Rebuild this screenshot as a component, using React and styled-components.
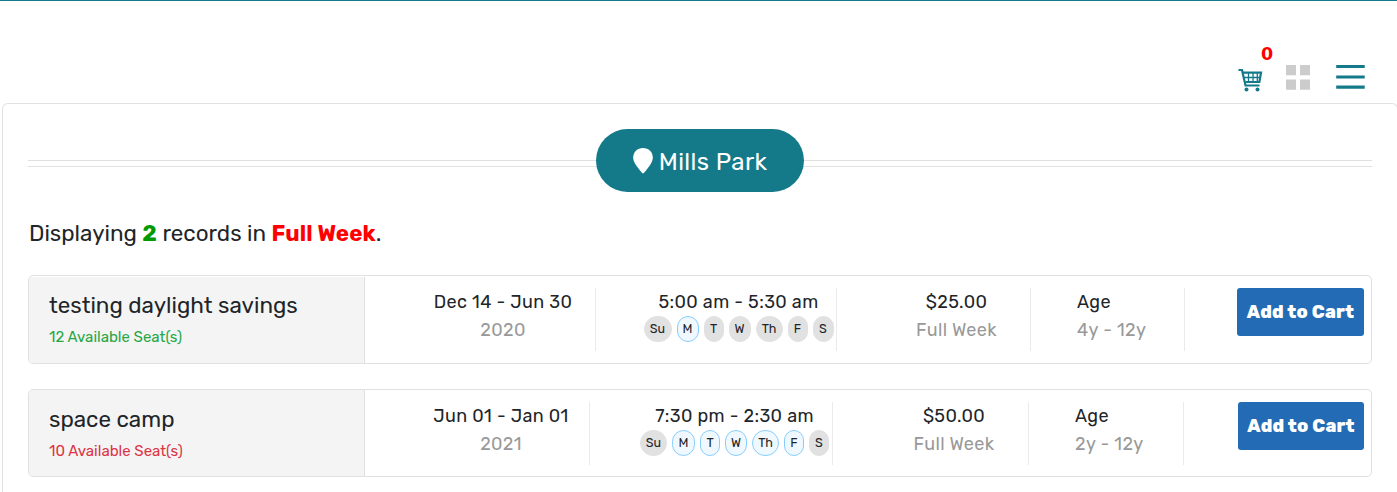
import React from "react";
import styled, { createGlobalStyle } from "styled-components";

const teal = "#147a8a";

const GlobalStyle = createGlobalStyle`
  * { box-sizing: border-box; }
  body {
    margin: 0;
    overflow: hidden;
    background: #fff;
    color: #212529;
    font-family: Rubik, Roboto, "Liberation Sans", sans-serif;
    font-size: 18px;
    font-weight: 400;
  }
`;

const Page = styled.div`
  height: 492px;
  overflow: hidden;
`;

const Header = styled.header`
  display: flex;
  justify-content: flex-end;
  align-items: flex-start;
  height: 103px;
  padding: 64px 32px 0 0;
  border-top: 1px solid ${teal};
`;

const HeaderIcon = styled.a`
  position: relative;
  display: block;
  height: 28px;
  margin-left: ${(p) => p.$gap || 0}px;
  svg { display: block; }
`;

const CartCount = styled.span`
  position: absolute;
  top: -21px;
  left: 23px;
  color: #f00;
  font: bold 17.5px/20px "DejaVu Sans", sans-serif;
`;

const Panel = styled.main`
  width: 1396px;
  height: 389px;
  margin-left: 2px;
  padding: 25px 25px 0;
  border: 1px solid #e1e1e1;
  border-bottom: 0;
  border-radius: 6px 6px 0 0;
`;

const Divider = styled.div`
  display: flex;
  align-items: center;
  height: 63px;
  &::before,
  &::after {
    content: "";
    flex: 1;
    height: 5px;
    margin-top: 6px;
    border: solid #e1e1e1;
    border-width: 1px 0;
  }
`;

const Location = styled.h2`
  display: flex;
  align-items: center;
  justify-content: center;
  gap: 6px;
  width: 208px;
  height: 63px;
  margin: 0;
  border-radius: 32px;
  background: ${teal};
  color: #fff;
  font-size: 24px;
  font-weight: 400;
  letter-spacing: 0.4px;
  line-height: 30px;
  padding-top: 3px;
  svg { margin-bottom: 2px; }
`;

const Summary = styled.p`
  margin: 27px 0 27px 1px;
  font-size: 22.4px;
  line-height: 29px;
  white-space: pre;
`;

const Strong = styled.strong`
  color: ${(p) => p.$color};
  font-weight: 700;
  letter-spacing: 0.1px;
`;

const Card = styled.article`
  display: grid;
  grid-template-columns: ${(p) => p.$columns};
  height: ${(p) => p.$height}px;
  width: 1344px;
  margin-bottom: 25px;
  border: 1px solid #e1e1e1;
  border-radius: 5px;
  overflow: hidden;
`;

const Title = styled.div`
  margin-top: ${(p) => p.$inset}px;
  padding: ${(p) => 14 - p.$inset}px 0 0 20px;
  border-right: 1px solid #e1e1e1;
  background: #f4f4f4;
`;

const Name = styled.h3`
  margin: 0;
  padding-top: 1px;
  font-size: 22.4px;
  font-weight: 400;
  line-height: 29px;
`;

const Seats = styled.div`
  margin-top: 7px;
  color: ${(p) => (p.$low ? "#dc3545" : "#28a745")};
  font-size: 15px;
  line-height: 20px;
`;

const Cell = styled.div`
  height: 63px;
  margin-top: 12px;
  padding: 0 ${(p) => p.$right || 0}px 0 ${(p) => p.$left}px;
  border-right: 1px solid #eaeaea;
  text-align: ${(p) => p.$align || "center"};
  white-space: nowrap;
`;

const Value = styled.div`
  line-height: 28px;
  letter-spacing: 0.36px;
`;

const Muted = styled(Value)`
  color: #999;
`;

const Days = styled.div`
  display: flex;
  justify-content: center;
  gap: 5px;
`;

const Day = styled.span`
  width: ${(p) => p.$width}px;
  height: 26px;
  border: 1px solid ${(p) => (p.$on ? "#87cefa" : "#e1e1e1")};
  border-radius: 13px;
  background: ${(p) => (p.$on ? "#f0f8ff" : "#e1e1e1")};
  font-size: 12.5px;
  line-height: 24px;
  text-align: center;
`;

const Action = styled.div`
  display: flex;
  justify-content: flex-end;
  padding: 12px 7px 0 0;
`;

const CartButton = styled.button`
  width: ${(p) => p.$width}px;
  height: 48px;
  padding: 0;
  border: 0;
  border-radius: 3px;
  background: #236cb5;
  color: #fff;
  font: 800 18px/48px Rubik, Roboto, sans-serif;
  letter-spacing: 0.2px;
  white-space: nowrap;
`;

const CartIcon = () => (
  <svg width="25" height="28" viewBox="0 0 25 28" fill="none" stroke={teal}>
    <path d="M0.5 5H4L7.5 20.5H21.5" strokeWidth="2.2" />
    <path d="M5 7.7H23L21.4 17H7.5" strokeWidth="2.2" />
    <path d="M6 12.5H22M10.5 7V17M15 7V17M19.3 7V17" strokeWidth="1.3" />
    <circle cx="8.5" cy="24.6" r="2" fill={teal} stroke="none" />
    <circle cx="19.5" cy="24.6" r="2" fill={teal} stroke="none" />
  </svg>
);

const GridIcon = () => (
  <svg width="24" height="25" fill="#ccc">
    <path d="M0 0h10v10.3H0zM14 0h10v10.3H14zM0 14.4h10v10.3H0zM14 14.4h10v10.3H14z" />
  </svg>
);

const MenuIcon = () => (
  <svg width="29" height="25" fill={teal}>
    <path d="M0.2 0h28.5v3H0.2zM0.2 10.4h28.5v3.2H0.2zM0.2 20.4h28.5v3.3H0.2z" />
  </svg>
);

const PinIcon = () => (
  <svg width="20" height="26" viewBox="0 0 20 26" fill="#fff">
    <path d="M10 0C4.3 0 .2 4.1.2 9.4c0 4.4 2.7 7.8 9 15.7q.8.9 1.6 0c6.3-7.9 9-11.3 9-15.7C19.8 4.1 15.7 0 10 0Z" />
  </svg>
);

const DAY_NAMES = ["Su", "M", "T", "W", "Th", "F", "S"];

const PROGRAMS = [
  {
    name: "testing daylight savings", seats: 12, low: false,
    dates: "Dec 14 - Jun 30", year: "2020", time: "5:00 am - 5:30 am",
    days: ["M"], dayWidths: [28, 22, 20, 22, 27, 20, 21],
    price: "$25.00", ages: "4y - 12y",
    height: 89, inset: 1, columns: "336px 231px 241px 194px 154px 1fr",
    pads: [[48, 2], [47, 2], [48, 2]], buttonWidth: 127,
  },
  {
    name: "space camp", seats: 10, low: true,
    dates: "Jun 01 - Jan 01", year: "2021", time: "7:30 pm - 2:30 am",
    days: ["M", "T", "W", "Th", "F"], dayWidths: [27, 23, 20, 22, 27, 20, 20],
    price: "$50.00", ages: "2y - 12y",
    height: 88, inset: 0, columns: "336px 225px 243px 196px 155px 1fr",
    pads: [[48, 0], [50, 3], [48, 1]], buttonWidth: 126,
  },
];

const ProgramCard = ({ program: p }) => (
  <Card $columns={p.columns} $height={p.height}>
    <Title $inset={p.inset}>
      <Name>{p.name}</Name>
      <Seats $low={p.low}>{p.seats} Available Seat(s)</Seats>
    </Title>
    <Cell $left={p.pads[0][0]} $right={p.pads[0][1]}>
      <Value>{p.dates}</Value>
      <Muted>{p.year}</Muted>
    </Cell>
    <Cell $left={p.pads[1][0]} $right={p.pads[1][1]}>
      <Value>{p.time}</Value>
      <Days>
        {DAY_NAMES.map((d, i) => (
          <Day key={d} $on={p.days.includes(d)} $width={p.dayWidths[i]}>{d}</Day>
        ))}
      </Days>
    </Cell>
    <Cell $left={p.pads[2][0]} $right={p.pads[2][1]}>
      <Value>{p.price}</Value>
      <Muted>Full Week</Muted>
    </Cell>
    <Cell $left={46} $align="left">
      <Value>Age</Value>
      <Muted>{p.ages}</Muted>
    </Cell>
    <Action>
      <CartButton $width={p.buttonWidth}>Add to Cart</CartButton>
    </Action>
  </Card>
);

export default function App() {
  return (
    <Page>
      <GlobalStyle />
      <Header>
        <HeaderIcon>
          <CartIcon />
          <CartCount>0</CartCount>
        </HeaderIcon>
        <HeaderIcon $gap={23}><GridIcon /></HeaderIcon>
        <HeaderIcon $gap={26}><MenuIcon /></HeaderIcon>
      </Header>
      <Panel>
        <Divider>
          <Location><PinIcon />Mills Park</Location>
        </Divider>
        <Summary>
          Displaying <Strong $color="#090">2</Strong> records in <Strong $color="#f00">Full Week</Strong>.
        </Summary>
        {PROGRAMS.map((p) => <ProgramCard key={p.name} program={p} />)}
      </Panel>
    </Page>
  );
}
